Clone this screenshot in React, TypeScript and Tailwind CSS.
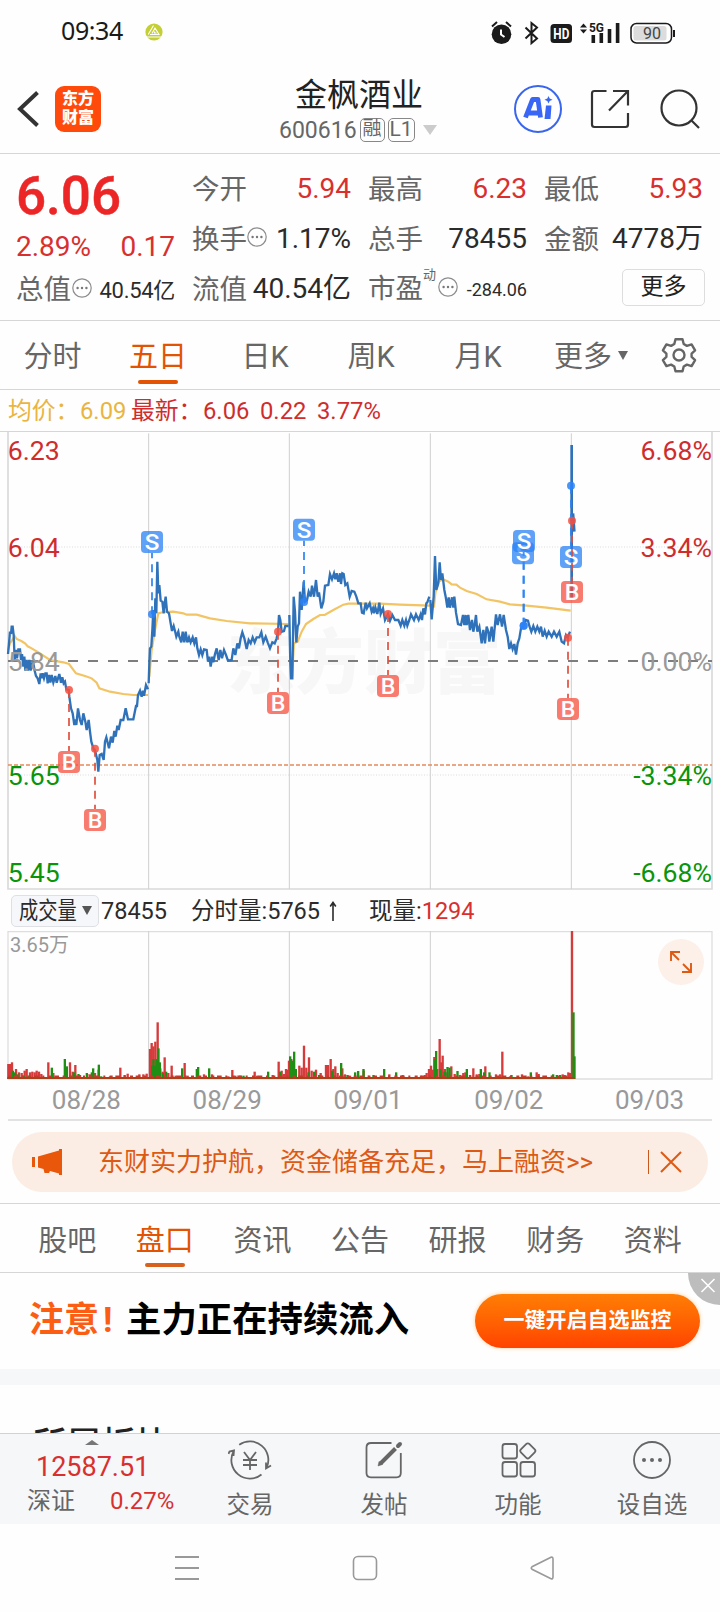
import type { ReactNode } from 'react';
import clsx from 'clsx';

type Point = [number, number];

// All chart coordinates are on a 3x grid (2160 units across 720px).
const PRICE_DAYS: Point[][] = [
  [
    [24, 672], [27, 640], [30, 605], [33, 612], [35, 590], [38, 590], [41, 615], [44, 690], [48, 660], [51, 685], [55, 658], [60, 658], [63, 690],
    [66, 672], [70, 710], [73, 680], [76, 722], [80, 690], [84, 722], [88, 690], [92, 722], [95, 700], [100, 700], [104, 722], [108, 738],
    [113, 745], [118, 762], [122, 730], [125, 745], [128, 730], [132, 745], [136, 730], [140, 730], [143, 760], [147, 735], [151, 758], [155, 735], [160, 758],
    [166, 738], [170, 758], [174, 745], [178, 732], [183, 758], [187, 742], [191, 760], [195, 755], [199, 778], [206, 780], [208, 800], [213, 835],
    [218, 850], [223, 885], [226, 868], [229, 885], [234, 835], [240, 870], [245, 885], [250, 850], [256, 875], [260, 900], [266, 870], [270, 905],
    [274, 935], [280, 955], [286, 965], [292, 990], [295, 1025], [299, 975], [305, 972], [311, 990], [315, 935], [319, 922], [327, 955],
    [333, 920], [338, 938], [343, 903], [347, 920], [352, 887], [356, 900], [362, 870], [370, 870], [377, 835], [384, 868], [400, 868],
    [408, 828], [411, 828], [414, 795], [420, 782], [425, 800], [429, 782], [432, 797], [438, 765], [444, 778],
  ],
  [
    [446, 760], [448, 700], [450, 655], [454, 650], [457, 600], [460, 540], [463, 620], [466, 505], [469, 550], [472, 395], [475, 490],
    [478, 465], [482, 512], [487, 515], [491, 550], [494, 520], [497, 500], [501, 545], [507, 550], [512, 580], [516, 603], [521, 588],
    [525, 603], [529, 620], [535, 605], [538, 620], [544, 637], [548, 605], [553, 637], [557, 605], [562, 637], [567, 622], [572, 637], [578, 622],
    [583, 640], [588, 622], [592, 655], [597, 675], [602, 658], [607, 675], [612, 658], [620, 660], [624, 695], [628, 680], [632, 710],
    [637, 680], [640, 697], [645, 672], [650, 655], [656, 690], [661, 660], [666, 685], [672, 660], [678, 675], [684, 692], [695, 690],
    [700, 655], [706, 675], [712, 640], [717, 655], [722, 625], [727, 607], [733, 625], [740, 657], [746, 630], [752, 640], [758, 622],
    [764, 637], [770, 622], [778, 622], [784, 607], [790, 637], [797, 620], [803, 637], [810, 655], [817, 637], [824, 640], [830, 625],
    [834, 605], [837, 555], [841, 570], [845, 605], [852, 603], [856, 588], [866, 588],
  ],
  [
    [868, 555], [871, 700], [873, 745], [877, 745], [881, 500], [885, 545], [889, 637], [893, 590], [897, 580], [900, 485], [905, 540],
    [911, 455], [915, 515], [921, 510], [926, 485], [932, 500], [936, 467], [942, 500], [948, 450], [953, 500], [957, 487], [964, 535],
    [970, 515], [975, 467], [985, 465], [990, 432], [996, 448], [1002, 430], [1006, 448], [1010, 430], [1015, 455], [1020, 430], [1023, 462], [1027, 430], [1031, 432],
    [1036, 465], [1042, 460], [1049, 500], [1055, 483], [1063, 485], [1069, 500], [1075, 520], [1082, 520], [1086, 548], [1091, 550],
    [1097, 518], [1101, 535], [1109, 520], [1115, 545], [1119, 535], [1122, 550], [1126, 532], [1132, 552], [1138, 518], [1142, 552], [1149, 535], [1155, 570],
    [1164, 552], [1170, 572], [1177, 555], [1185, 570], [1195, 570], [1202, 587], [1207, 570], [1213, 587], [1218, 570], [1222, 587],
    [1228, 570], [1233, 553], [1242, 570], [1248, 553], [1256, 570], [1262, 553], [1266, 570], [1270, 535], [1275, 553], [1279, 520], [1282, 517], [1288, 500],
  ],
  [
    [1291, 510], [1295, 568], [1301, 500], [1305, 378], [1309, 480], [1315, 460], [1319, 397], [1323, 450], [1327, 430], [1333, 480],
    [1337, 500], [1342, 533], [1346, 502], [1350, 533], [1356, 502], [1360, 533], [1363, 500], [1368, 548], [1374, 582], [1383, 585], [1389, 555], [1393, 585],
    [1397, 555], [1400, 585], [1405, 555], [1410, 600], [1416, 570], [1420, 605], [1424, 585], [1428, 555], [1432, 605], [1438, 590], [1445, 640], [1450, 600], [1455, 640],
    [1460, 590], [1465, 605], [1468, 635], [1475, 590], [1480, 635], [1488, 553], [1493, 585], [1500, 553], [1506, 590], [1511, 555], [1518, 600],
    [1523, 620], [1528, 657], [1533, 640], [1538, 657], [1543, 642], [1548, 674], [1553, 640], [1558, 625], [1563, 595], [1570, 588],
    [1577, 570], [1584, 572], [1588, 588], [1594, 605], [1600, 588], [1606, 605], [1612, 590], [1618, 605], [1623, 590], [1628, 620],
    [1634, 602], [1640, 620], [1646, 605], [1655, 620], [1662, 605], [1670, 620], [1678, 605], [1685, 635], [1692, 640], [1698, 615],
    [1703, 622], [1710, 605],
  ],
];

const AVERAGE_DAYS: Point[][] = [
  [
    [24, 660], [30, 640], [44, 618], [50, 627], [64, 633], [75, 640], [83, 649], [95, 655], [115, 667], [150, 690], [190, 697], [207, 702],
    [228, 730], [255, 738], [275, 745], [290, 758], [298, 775], [330, 785], [370, 792], [400, 795], [444, 795],
  ],
  [
    [448, 740], [455, 660], [465, 600], [475, 550], [490, 546], [520, 545], [550, 550], [560, 554], [590, 554], [630, 565], [680, 573],
    [750, 580], [866, 582],
  ],
  [
    [876, 740], [882, 640], [893, 635], [905, 605], [918, 582], [940, 567], [960, 555], [974, 555], [1000, 540], [1030, 524], [1045, 521],
    [1140, 521], [1200, 524], [1290, 527],
  ],
  [
    [1295, 532], [1302, 530], [1306, 490], [1315, 455], [1330, 448], [1345, 455], [1355, 463], [1369, 464], [1380, 473], [1400, 483], [1430, 492],
    [1460, 508], [1500, 515], [1530, 523], [1580, 527], [1640, 533], [1712, 542],
  ],
];

type Trade = { kind: 'B' | 'S'; x: number; y: number; dotX?: number; dotY: number };

const TRADES: Trade[] = [
  { kind: 'S', x: 456, y: 336, dotY: 553 },
  { kind: 'B', x: 207, y: 996, dotY: 780 },
  { kind: 'B', x: 285, y: 1170, dotY: 956 },
  { kind: 'B', x: 834, y: 819, dotY: 605 },
  { kind: 'S', x: 912, y: 299, dotY: 516 },
  { kind: 'B', x: 1164, y: 768, dotY: 552 },
  { kind: 'S', x: 1569, y: 370, dotX: 1571, dotY: 587 },
  { kind: 'S', x: 1572, y: 333, dotX: 1571, dotY: 587 },
  { kind: 'S', x: 1713, y: 381, dotY: 167 },
  { kind: 'B', x: 1716, y: 486, dotY: 272 },
  { kind: 'B', x: 1704, y: 837, dotY: 623 },
];

const PRICE_LABELS = [
  { y: 90, price: '6.23', pct: '6.68%', color: '#cf2d2d' },
  { y: 380, price: '6.04', pct: '3.34%', color: '#cf2d2d' },
  { y: 722, price: '5.84', pct: '0.00%', color: '#999999' },
  { y: 1064, price: '5.65', pct: '-3.34%', color: '#0a940a' },
  { y: 1355, price: '5.45', pct: '-6.68%', color: '#0a940a' },
];

// [x, height]
const UP_VOLUME: Point[] = [
  [25, 45], [30, 45], [36, 50], [48, 30], [57, 20], [65, 18], [74, 25], [80, 30], [90, 20], [97, 22], [104, 20], [110, 25], [117, 22], [124, 15],
  [145, 50], [160, 18], [170, 8], [210, 50], [218, 22], [226, 42], [240, 12], [262, 15], [270, 14], [285, 18], [296, 28], [310, 6], [330, 8],
  [361, 34], [374, 12], [383, 16], [403, 6], [418, 14], [430, 14], [440, 16], [450, 90], [455, 108], [460, 98], [466, 112], [473, 170],
  [481, 32], [488, 22], [494, 65], [505, 18], [515, 40], [527, 10], [554, 48], [563, 10], [612, 14], [636, 14], [658, 6], [685, 8], [697, 27],
  [706, 10], [720, 10], [764, 22], [771, 10], [818, 12], [836, 52], [845, 25], [852, 15], [858, 30], [862, 28], [867, 55], [874, 60], [879, 50], [898, 40],
  [905, 34], [912, 100], [919, 34], [927, 65], [935, 25], [948, 28], [962, 18], [978, 42], [984, 42], [992, 60], [1000, 30], [1006, 38],
  [1013, 18], [1027, 32], [1035, 14], [1050, 10], [1091, 25], [1108, 10], [1168, 14], [1208, 12], [1263, 10], [1275, 12], [1280, 18],
  [1287, 30], [1293, 40], [1298, 28], [1303, 66], [1312, 30], [1319, 120], [1324, 50], [1328, 70], [1335, 30], [1342, 20], [1354, 38], [1364, 15], [1380, 12],
  [1390, 18], [1396, 20], [1410, 12], [1420, 32], [1430, 14], [1438, 15], [1456, 38], [1488, 14], [1500, 14], [1507, 82], [1530, 8],
  [1566, 14], [1585, 8], [1610, 20], [1616, 15], [1635, 8], [1658, 10], [1688, 14], [1694, 12], [1705, 20], [1710, 18], [1716, 444],
];

const DOWN_VOLUME: Point[] = [
  [38, 25], [44, 20], [52, 14], [70, 10], [85, 10], [155, 34], [194, 60], [200, 38], [221, 20], [235, 15], [260, 18], [275, 20], [279, 32],
  [296, 43], [303, 8], [456, 40], [460, 60], [465, 40], [470, 60], [475, 92], [479, 50], [488, 18], [498, 22], [546, 32], [590, 30], [594, 36], [627, 32],
  [730, 10], [804, 22], [840, 22], [870, 68], [877, 55], [882, 82], [887, 30], [925, 20], [942, 22], [957, 12], [996, 25], [1023, 48],
  [1042, 12], [1065, 20], [1074, 24], [1090, 30], [1120, 12], [1152, 30], [1188, 20], [1304, 60], [1308, 84], [1321, 30], [1333, 22], [1342, 36], [1348, 34], [1372, 24],
  [1400, 30], [1442, 30], [1452, 20], [1468, 20], [1534, 12], [1592, 20], [1659, 14], [1670, 12], [1680, 12], [1720, 200], [1723, 68],
];

const GRID_X = [446, 868, 1291, 1714];
const DATES = ['08/28', '08/29', '09/01', '09/02', '09/03'];

const toPoints = (pts: Point[]) => pts.map((p) => p.join(',')).join(' ');

function TradeMark({ kind, x, y, dotX, dotY }: Trade) {
  const fill = kind === 'S' ? '#2b82f6' : '#f4503f';
  const line = kind === 'S' ? '#2b82f6' : '#e0503f';
  const edge = y > dotY ? y - 33 : y + 33;
  return (
    <g>
      <line x1={dotX ?? x} x2={dotX ?? x} y1={dotY} y2={edge} stroke={line} strokeWidth="6" strokeDasharray="24 18" opacity="0.85" />
      <circle cx={dotX ?? x} cy={dotY} r="12" fill={fill} opacity="0.85" />
      <rect x={x - 33} y={y - 33} width="66" height="66" rx="12" fill={fill} opacity="0.75" />
      <text x={x} y={y + 24} fontSize="66" fontWeight="500" fill="#fff" textAnchor="middle" textLength="44" lengthAdjust="spacingAndGlyphs">
        {kind}
      </text>
    </g>
  );
}

function PriceChart() {
  return (
    <svg viewBox="0 0 2160 1380" className="block h-[460px] w-[720px]">
      <text x="680" y="774" fontSize="210" fontWeight="900" fill="#f7f7f7" textLength="824" lengthAdjust="spacingAndGlyphs">
        东方财富
      </text>
      <line x1="0" x2="2160" y1="4.5" y2="4.5" stroke="#d6d6d6" strokeWidth="3" />
      <path d="M24 6V1377H2136V6" fill="none" stroke="#d9d9d9" strokeWidth="5" />
      {GRID_X.map((x) => (
        <line key={x} x1={x} x2={x} y1="10" y2="1377" stroke="#cfcfcf" strokeWidth="3" />
      ))}
      <path d="M24 351H2136M24 1035H2136" stroke="#dcdcdc" strokeWidth="3" strokeDasharray="3 5" />
      <path d="M24 693H2136" stroke="#7d7d7d" strokeWidth="6" strokeDasharray="30 30" />
      <path d="M24 1005H2136" stroke="#e58a5c" strokeWidth="5" strokeDasharray="12 6" />
      {AVERAGE_DAYS.map((pts, i) => (
        <polyline key={i} points={toPoints(pts)} fill="none" stroke="#f2c463" strokeWidth="6.5" />
      ))}
      {PRICE_DAYS.map((pts, i) => (
        <polyline key={i} points={toPoints(pts)} fill="none" stroke="#2f72b9" strokeWidth="7" />
      ))}
      <path d="M1715 45V510M1719 250L1723 305" fill="none" stroke="#2f72b9" strokeWidth="8" />
      {TRADES.map((t, i) => (
        <TradeMark key={i} {...t} />
      ))}
      {PRICE_LABELS.map((l) => (
        <g key={l.price} fontSize="80" fill={l.color}>
          <text x="23" y={l.y}>{l.price}</text>
          <text x="2136" y={l.y} textAnchor="end">{l.pct}</text>
        </g>
      ))}
    </svg>
  );
}

function VolumeChart() {
  return (
    <svg viewBox="0 0 2160 450" className="block h-[150px] w-[720px]">
      <path d="M24 444V1.5H2136V444Z" fill="none" stroke="#dedede" strokeWidth="4" />
      {GRID_X.map((x) => (
        <line key={x} x1={x} x2={x} y1="0" y2="444" stroke="#cfcfcf" strokeWidth="3" />
      ))}
      {UP_VOLUME.map(([x, h]) => (
        <rect key={x} x={x - 3.5} y={444 - h} width="7" height={h} fill="#d63a3a" />
      ))}
      {DOWN_VOLUME.map(([x, h]) => (
        <rect key={x} x={x - 3} y={444 - h} width="7" height={h} fill="#1f8f14" />
      ))}
      <path d="M24 436H1710" stroke="#c43a2a" strokeWidth="5" strokeDasharray="9 8 14 11 6 13" />
      <rect x="22" y="438" width="1702" height="6" fill="#a8401a" />
      <text x="30" y="63" fontSize="60" fill="#999">3.65万</text>
    </svg>
  );
}

function MoreDots() {
  return (
    <svg viewBox="0 0 20 20" className="size-5 shrink-0">
      <circle cx="10" cy="10" r="9.2" fill="none" stroke="#8c8c8c" strokeWidth="1.2" />
      <circle cx="5.6" cy="10" r="1.2" fill="#777" />
      <circle cx="10" cy="10" r="1.2" fill="#777" />
      <circle cx="14.4" cy="10" r="1.2" fill="#777" />
    </svg>
  );
}

function StatusBar() {
  return (
    <div className="flex h-16 items-center pb-[3px] pl-[61px]">
      <span className="w-[84px] font-['Noto_Sans'] text-[25px] tracking-[-0.4px] text-[#1a1a1a]">09:34</span>
      <svg viewBox="0 0 18 18" className="mt-[2px] size-[18px]">
        <circle cx="9" cy="9" r="8.6" fill="#c3cf34" />
        <path d="M1 14H17M3.200 11.500L8.500 2.500M5 11.500H14L10 5L7 10.500M9.500 8.500v1.500h2" fill="none" stroke="#fff" strokeWidth="1.1" />
      </svg>
      <svg viewBox="0 0 190 30" className="ml-auto mr-[42px] h-[30px] w-[190px]">
        <circle cx="13.5" cy="18.3" r="9.8" fill="#1b1b1b" />
        <path d="M13 13.5v5l3.5 2.5" fill="none" stroke="#fff" strokeWidth="2" />
        <path d="M4 10.5l5-4.5M18 6l5 4.5" stroke="#1b1b1b" strokeWidth="2" />
        <path d="M37.5 11.5L49 22.5L43.5 27.2V7L49 11.5L37.5 22.5" fill="none" stroke="#1b1b1b" strokeWidth="2" />
        <rect x="62.5" y="8" width="21.5" height="19" rx="3.5" fill="#1b1b1b" />
        <text x="73.3" y="22.8" fontSize="15" fontWeight="700" textAnchor="middle" fill="#fff" textLength="16" lengthAdjust="spacingAndGlyphs">HD</text>
        <path d="M92 11.5l3.5-4 3.5 4zM92 13.5l3.5 4 3.5-4z" fill="#1b1b1b" />
        <text x="101" y="15.5" fontSize="13.5" fontWeight="700" fill="#1b1b1b" textLength="15" lengthAdjust="spacingAndGlyphs">5G</text>
        <path d="M105.300 27v-8M113.300 27v-10M121.500 27v-14M129.600 27V7" stroke="#1b1b1b" strokeWidth="3.600" />
        <rect x="143" y="7.500" width="40.500" height="19.500" rx="5.500" fill="#fff" stroke="#1b1b1b" strokeWidth="1.500" />
        <rect x="145.500" y="10" width="33" height="14.500" rx="2.500" fill="#dcdcdc" />
        <path d="M186 14v7" stroke="#1b1b1b" strokeWidth="2" />
        <text x="164" y="23" fontSize="16" textAnchor="middle" fill="#444">90</text>
      </svg>
    </div>
  );
}

function Header() {
  return (
    <header className="flex h-[90px] items-center border-b border-[#d6d6d6] pl-[17px] pr-[20px]">
      <svg viewBox="0 0 24 38" className="h-[38px] w-6">
        <path d="M20.500 2.500L3 19L20.500 35.500" fill="none" stroke="#333" strokeWidth="4" />
      </svg>
      <div className="ml-[14px] flex size-[46px] flex-col items-center justify-center rounded-[9px] bg-[#ff4a0b] text-[16px]/[18.500px] font-black text-white">
        <span>东方</span>
        <span>财富</span>
      </div>
      <div className="ml-[178px] w-[160px]">
        <div className="flex h-[40px] items-center justify-center whitespace-nowrap text-[32px] text-[#222]">金枫酒业</div>
        <div className="mt-[2px] flex h-[26px] items-center whitespace-nowrap text-[23px] text-[#666]">
          <span className="pt-[3px]">600616</span>
          <span className="ml-[3px] flex h-[24px] w-[25px] items-center justify-center rounded-[5px] border border-[#888] text-[19px]">融</span>
          <span className="ml-[3px] flex h-[24px] w-[27px] items-center justify-center rounded-[5px] border border-[#888] text-[21px]">L1</span>
          <svg viewBox="0 0 14 10" className="ml-[8px] h-[10px] w-[14px] shrink-0">
            <path d="M0 0H14L7 10z" fill="#ccc" />
          </svg>
        </div>
      </div>
      <svg viewBox="0 0 48 48" className="ml-auto size-12 shrink-0">
        <circle cx="24" cy="24" r="23" fill="none" stroke="#3a66ee" strokeWidth="2" />
        <path d="M11.500 32.500L18.500 14.500H24L26.500 32.500M14.500 28H25" fill="none" stroke="#3a66f5" strokeWidth="4.800" strokeLinejoin="round" />
        <path d="M32 20.500h5.500l-1 13.500h-6z" fill="#3a66f5" />
        <path d="M34.500 11l1.200 2.600 2.800 1.100-2.800 1.200-1.200 2.700-1.200-2.700-2.800-1.200 2.800-1.100z" fill="#3a66f5" />
      </svg>
      <svg viewBox="0 0 40 40" className="ml-[28px] size-10 shrink-0" fill="none" stroke="#333" strokeWidth="2.200">
        <path d="M16.500 2H4.500Q2 2 2 4.500V35.500Q2 38 4.500 38H35.500Q38 38 38 35.500V24" />
        <path d="M23 2H38V16.500M38 2L19 21.500" />
      </svg>
      <svg viewBox="0 0 40 40" className="ml-[30px] size-10 shrink-0" fill="none" stroke="#333" strokeWidth="2.200">
        <circle cx="19" cy="19" r="17.500" />
        <path d="M31 31l8 8" />
      </svg>
    </header>
  );
}

function QuoteCell({ label, value, red, dots }: { label: string; value: string; red?: boolean; dots?: boolean }) {
  return (
    <div className="flex h-[50px] items-center whitespace-nowrap text-[27.500px]">
      <span className="-ml-px pt-px text-[#666]">{label}</span>
      {dots && (
        <span className="relative -top-0.5">
          <MoreDots />
        </span>
      )}
      <span className={clsx('ml-auto text-[28px]', red ? 'text-[#d8302f]' : 'text-[#2b2b2b]')}>{value}</span>
    </div>
  );
}

function QuotePanel() {
  return (
    <section className="grid h-[167px] grid-cols-4 gap-x-[18px] border-b border-[#d6d6d6] px-[17px] pt-[10px]">
      <div className="whitespace-nowrap">
        <div className="-ml-px flex h-[65px] items-center text-[53px] font-medium text-[#ec2626] [-webkit-text-stroke:0.5px_#ec2626]">6.06</div>
        <div className="-ml-px flex h-[36px] items-center justify-between text-[28px] text-[#d8302f]">
          <span>2.89%</span>
          <span>0.17</span>
        </div>
        <div className="-ml-px flex h-[50px] items-center text-[27.500px] text-[#666]">
          <span>总值</span>
          <span className="relative -top-0.5 ml-px"><MoreDots /></span>
          <span className="ml-auto text-[22px] tracking-[-0.300px] text-[#2b2b2b]">40.54亿</span>
        </div>
      </div>
      <div>
        <QuoteCell label="今开" value="5.94" red />
        <QuoteCell label="换手" value="1.17%" dots />
        <QuoteCell label="流值" value="40.54亿" />
      </div>
      <div>
        <QuoteCell label="最高" value="6.23" red />
        <QuoteCell label="总手" value="78455" />
        <div className="flex h-[50px] items-center whitespace-nowrap text-[27.500px] text-[#666]">
          <span className="-ml-px">市盈</span>
          <span className="relative -top-3.5 text-[13px]">动</span>
          <span className="relative -top-0.5 ml-[2px]"><MoreDots /></span>
          <span className="ml-auto text-[18px] text-[#2b2b2b]">-284.06</span>
        </div>
      </div>
      <div>
        <QuoteCell label="最低" value="5.93" red />
        <QuoteCell label="金额" value="4778万" />
        <div className="flex h-[46px] items-center justify-end">
          <button className="mr-[-2px] h-[37px] w-[83px] rounded-[5px] border border-[#ddd] text-[23px]/[30px] text-[#222]">更多</button>
        </div>
      </div>
    </section>
  );
}

function PeriodTab({ children, active, className }: { children: ReactNode; active?: boolean; className: string }) {
  return (
    <div
      className={clsx(
        'relative flex items-center justify-center whitespace-nowrap pt-[5px] text-[29px]',
        active ? 'text-[#e25303]' : 'text-[#666]',
        className,
      )}
    >
      {children}
      {active && <span className="absolute bottom-[5px] h-1 w-10 rounded-full bg-[#e25303]" />}
    </div>
  );
}

function PeriodTabs() {
  return (
    <nav className="flex h-[69px] border-b border-[#d6d6d6]">
      <PeriodTab className="w-[105px]">分时</PeriodTab>
      <PeriodTab className="w-[106px]" active>五日</PeriodTab>
      <PeriodTab className="w-[108px]">日K</PeriodTab>
      <PeriodTab className="w-[104px]">周K</PeriodTab>
      <PeriodTab className="w-[110px]">月K</PeriodTab>
      <PeriodTab className="w-[116px]">
        更多
        <svg viewBox="0 0 10 9" className="mb-[4px] ml-[6px] h-[9px] w-[10px]">
          <path d="M0 0H10L5 9z" fill="#666" />
        </svg>
      </PeriodTab>
      <PeriodTab className="w-[59px]">
        <svg viewBox="0 0 36 36" className="mb-[5px] size-9" fill="none" stroke="#666" strokeWidth="2.400">
          <path
            d="M14.500 2.200h7l1.200 4.800 3.200 1.900 4.700-1.500 3.500 6-3.500 3.200v3.200l3.500 3.300-3.500 6-4.700-1.500-3.200 1.900-1.200 4.700h-7l-1.200-4.700-3.200-1.900-4.700 1.500-3.500-6 3.500-3.300v-3.200l-3.500-3.200 3.500-6 4.700 1.500 3.200-1.900z"
            strokeLinejoin="round"
          />
          <circle cx="18" cy="18" r="5.500" />
        </svg>
      </PeriodTab>
    </nav>
  );
}

function AverageRow() {
  return (
    <div className="flex h-[40px] items-center whitespace-pre pl-[8px] pt-[3px] text-[23.800px]">
      <span className="w-[72px] text-[#e9b540]">均价：</span>
      <span className="w-[51px] text-[#e9b540]">6.09</span>
      <span className="w-[72px] text-[#cf2d2d]">最新：</span>
      <span className="w-[57px] text-[#cf2d2d]">6.06</span>
      <span className="w-[57px] text-[#cf2d2d]">0.22</span>
      <span className="text-[#cf2d2d]">3.77%</span>
    </div>
  );
}

function VolumeRow() {
  return (
    <div className="flex h-[41px] items-center whitespace-nowrap pl-[11px] text-[24px] text-[#2b2b2b]">
      <div className="flex h-[32px] w-[88px] items-center rounded-[5px] border border-[#dfe0e3] bg-[#f6f7fa] pl-[7px]">
        <span className="w-[58px] origin-left scale-x-[0.8]">成交量</span>
        <svg viewBox="0 0 10 9" className="ml-[5px] h-[9px] w-[10px]">
          <path d="M0 0H10L5 9z" fill="#555" />
        </svg>
      </div>
      <span className="ml-[2px] w-[90px] pt-[2px] text-[23.500px]">78455</span>
      <span className="w-[138px] pt-[2px] text-[23.500px]">分时量:5765</span>
      <svg viewBox="0 0 8 20" className="h-5 w-2">
        <path d="M4 20V3M1.200 5.500L4 1.500 6.800 5.500" fill="none" stroke="#2b2b2b" strokeWidth="1.600" />
      </svg>
      <span className="ml-[32px] pt-[2px] text-[23.500px]">现量:</span>
      <span className="pt-[2px] text-[23.500px] text-[#d8302f]">1294</span>
    </div>
  );
}

function Promo() {
  return (
    <div className="mx-3 mt-[11px] flex h-[60px] items-center rounded-full bg-[#fcede4] pl-[20px] pr-[26px] text-[26px] text-[#dd5a14]">
      <svg viewBox="0 0 30 26" className="h-[26px] w-[30px]">
        <path d="M0 8h3v10H0zM6 7.500L27 1.500V0h3v26h-3v-1.500l-9-2.500-1 2h-4.500l-1-4L6 18.500z" fill="#e9570a" />
      </svg>
      <span className="ml-[36px] whitespace-nowrap pt-px">东财实力护航，资金储备充足，马上融资&gt;&gt;</span>
      <span className="ml-auto h-6 w-px bg-[#c9581c]" />
      <svg viewBox="0 0 22 22" className="ml-[11px] size-[22px]">
        <path d="M1 1l20 20M21 1L1 21" stroke="#dd5a14" strokeWidth="2" />
      </svg>
    </div>
  );
}

const SECTIONS = ['股吧', '盘口', '资讯', '公告', '研报', '财务', '资料'];

function SectionTabs() {
  return (
    <nav className="mt-[11px] grid h-[70px] grid-cols-7 border-y border-[#d6d6d6] px-[18.500px]">
      {SECTIONS.map((name) => (
        <div key={name} className={clsx('relative flex items-center justify-center pt-[7px] text-[29px]', name === '盘口' ? 'text-[#e25303]' : 'text-[#666]')}>
          {name}
          {name === '盘口' && <span className="absolute bottom-[5px] h-1 w-10 rounded-full bg-[#d8611e]" />}
        </div>
      ))}
    </nav>
  );
}

function AdBanner() {
  return (
    <div className="relative flex h-[96px] items-center overflow-hidden pl-[29px] pr-5">
      <span className="w-[97px] whitespace-nowrap text-[35px] font-bold text-[#fb5d13]">
        注意<span className="ml-[4px]">!</span>
      </span>
      <span className="whitespace-nowrap text-[35.400px] font-bold text-black">主力正在持续流入</span>
      <button className="ml-auto h-[54px] w-[225px] rounded-full bg-linear-to-b from-[#ff7d05] to-[#ff4200] text-[21px] font-bold text-white shadow-[0_0_4px_#ffcf9a]">
        一键开启自选监控
      </button>
      <svg viewBox="0 0 32 32" className="absolute right-0 top-0 size-8">
        <path d="M0 0H32V32A32 32 0 0 1 0 0z" fill="#bdbdbd" />
        <path d="M13.500 6l13 13M26.500 6l-13 13" stroke="#fff" strokeWidth="1.600" />
      </svg>
    </div>
  );
}

function BottomItem({ label, children }: { label: string; children: ReactNode }) {
  return (
    <div className="flex w-[134px] flex-col items-center">
      <svg viewBox="0 0 44 40" className="mt-[6px] h-10 w-11" fill="none" stroke="#666" strokeWidth="1.800">
        {children}
      </svg>
      <span className="mt-[9px] text-[23.500px]/[32px] text-[#666]">{label}</span>
    </div>
  );
}

function BottomBar() {
  return (
    <div className="flex h-[91px] border-t border-[#d0d2d4] bg-[#f6f7f9]">
      <div className="flex w-[183px] flex-col whitespace-nowrap">
        <svg viewBox="0 0 14 5" className="ml-[85px] mt-[6px] h-[5px] w-[14px]">
          <path d="M0 5L7 0 14 5z" fill="#777" />
        </svg>
        <span className="ml-[36px] mt-[6px] text-[27px]/[32px] text-[#d8302f]">12587.51</span>
        <div className="flex items-center pl-[27px] pt-px text-[24px]/[34px]">
          <span className="w-[83px] text-[#666]">深证</span>
          <span className="text-[#d8302f]">0.27%</span>
        </div>
      </div>
      <BottomItem label="交易">
        <path d="M11.200 4.800A18.500 18.500 0 0 1 38.500 28M38 22.500V28.500L43 25.500M33.500 34.500A18.500 18.500 0 0 1 5.500 11.500M0.500 14L1.500 11.500L6 10.500L5.500 16" />
        <path d="M16 12l6 8 6-8M22 20v10M15 20h14M15 25h14" />
      </BottomItem>
      <BottomItem label="发帖">
        <path d="M29.500 3H9Q4.500 3 4.500 7.500V33Q4.500 37.300 9 37.300H34.500Q38.800 37.300 38.800 33V13" />
        <path d="M18.500 23.500L33.500 8.500" strokeWidth="4" />
        <path d="M16 26l1-4.500 3.500 3z" fill="#666" strokeWidth="0.500" />
        <path d="M36 6L38 4" strokeWidth="4" strokeLinecap="round" />
      </BottomItem>
      <BottomItem label="功能">
        <rect x="6.500" y="4" width="14.500" height="14.500" rx="2.500" />
        <rect x="6.500" y="22" width="14.500" height="14.500" rx="2.500" />
        <rect x="24.500" y="22" width="14.500" height="14.500" rx="2.500" />
        <rect x="25.900" y="5" width="11.800" height="11.800" rx="2" transform="rotate(45 31.800 10.900)" />
      </BottomItem>
      <BottomItem label="设自选">
        <circle cx="22" cy="20" r="18" />
        <g fill="#666" stroke="none">
          <circle cx="14" cy="20" r="2" />
          <circle cx="22" cy="20" r="2" />
          <circle cx="30" cy="20" r="2" />
        </g>
      </BottomItem>
    </div>
  );
}

function SystemNav() {
  return (
    <div className="flex h-[88px] items-center justify-between pl-[175px] pr-[166px]">
      <svg viewBox="0 0 24 26" className="h-[26px] w-6" stroke="#999" strokeWidth="1.800">
        <path d="M0 2H24M0 13H24M0 24H24" />
      </svg>
      <svg viewBox="0 0 26 26" className="size-[26px]" fill="none" stroke="#999" strokeWidth="1.600">
        <rect x="1.500" y="1.500" width="23" height="23" rx="4.500" />
      </svg>
      <svg viewBox="0 0 24 26" className="h-[26px] w-6" fill="none" stroke="#999" strokeWidth="1.600">
        <path d="M21 2.200L2 11.800Q0.500 13 2 14.200L21 23.800Q23 24.200 23 22V4Q23 1.600 21 2.200z" />
      </svg>
    </div>
  );
}

export default function App() {
  return (
    <div className="flex h-[1612px] w-[720px] flex-col overflow-hidden bg-[#fefefe] font-[Roboto,'Noto_Sans_CJK_SC',sans-serif]">
      <StatusBar />
      <Header />
      <QuotePanel />
      <PeriodTabs />
      <AverageRow />
      <PriceChart />
      <VolumeRow />
      <div className="relative">
        <VolumeChart />
        <button className="absolute right-[16px] top-[8px] flex size-[46px] items-center justify-center rounded-full bg-[#fdf0e9]">
          <svg viewBox="0 0 22 22" className="size-[22px]" fill="none" stroke="#dd5a14" strokeWidth="1.900">
            <path d="M1 10V1H10M1 1L9 9M21 12V21H12M21 21L13 13" />
          </svg>
        </button>
      </div>
      <div className="mx-2 h-[40px] border-b-2 border-[#e2e2e2]">
        <div className="-mr-2 ml-2 grid grid-cols-5 text-center text-[26px]/[38px] text-[#999]">
          {DATES.map((d) => (
            <span key={d}>{d}</span>
          ))}
        </div>
      </div>
      <Promo />
      <SectionTabs />
      <AdBanner />
      <div className="h-4 bg-[#f6f7f9]" />
      <div className="h-[48px] overflow-hidden pl-[32px] pt-[39px]">
        <h2 className="text-[34.500px]/[40px] font-medium text-[#222]">所属板块</h2>
      </div>
      <BottomBar />
      <SystemNav />
    </div>
  );
}
